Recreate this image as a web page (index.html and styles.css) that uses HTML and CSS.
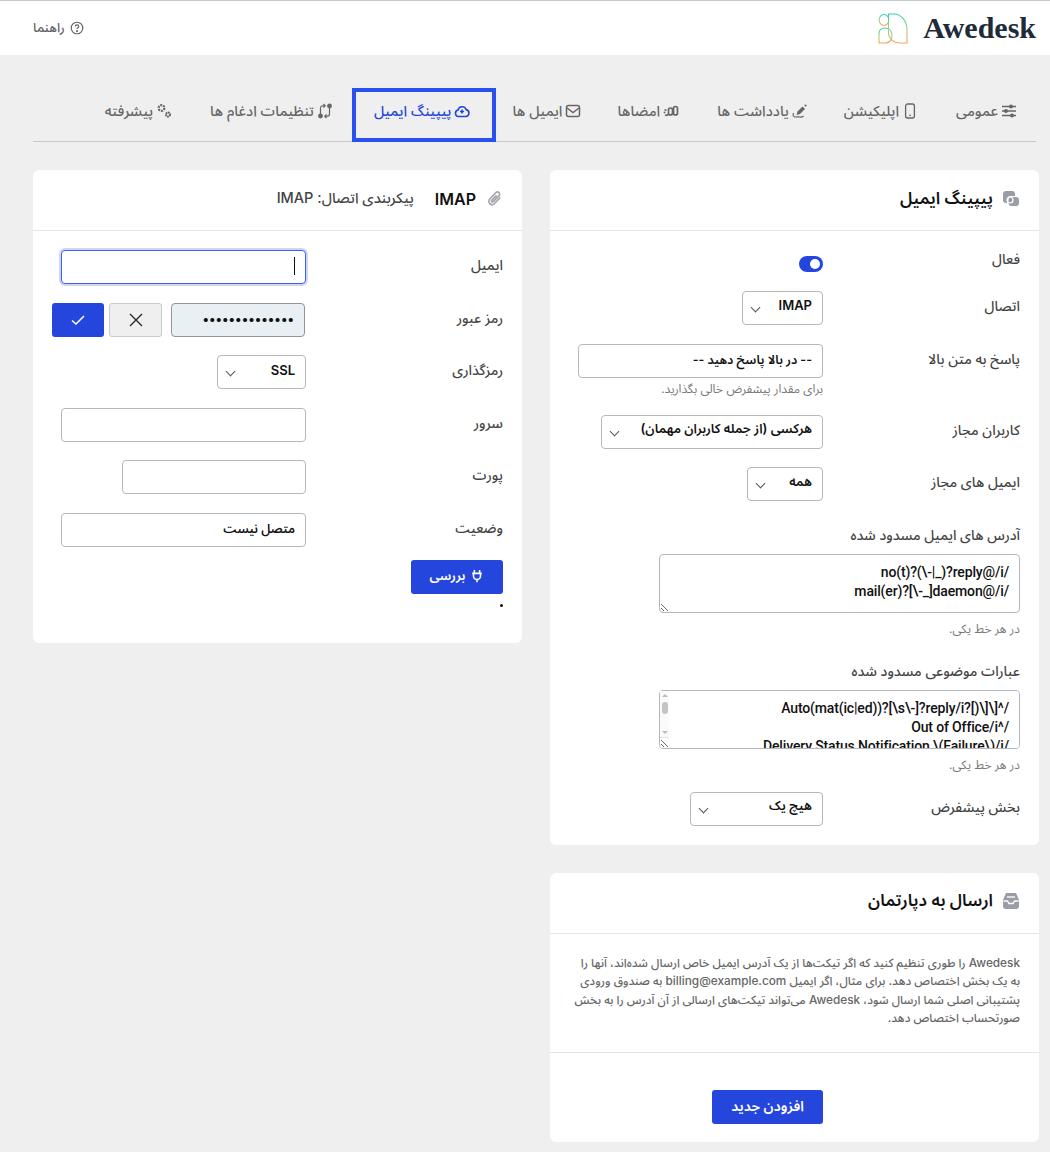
FILE: index.html
```html
<!DOCTYPE html>
<html lang="fa" dir="rtl">
<head>
    <meta charset="UTF-8">
    <title>Awedesk</title>
    <link rel="stylesheet" href="styles.css">
</head>
<body>
    <header class="topbar">
        <div class="brand">
            <span class="brand-name" dir="ltr">Awedesk</span>
            <svg class="brand-mark" viewBox="0 0 30 31" width="30" height="31" fill="none">
                <defs>
                    <linearGradient id="brandGrad" x1="0" y1="0" x2="0" y2="1">
                        <stop offset="0" stop-color="#2fd0a8"/>
                        <stop offset="0.5" stop-color="#a9cf8c"/>
                        <stop offset="1" stop-color="#f2a65a"/>
                    </linearGradient>
                </defs>
                <g stroke="url(#brandGrad)" stroke-width="1.100">
                    <ellipse cx="6" cy="7" rx="4.800" ry="5.500"/>
                    <path d="M1 30v-9c0-4 2.500-6 6-6 4.500 0 7 3.500 7 8 0 4-3 7-6.500 7z"/>
                    <path d="M10.500 1h5c8 0 13.500 7 13.500 16v13h-7c-6.500 0-11.500-4-11.500-11z"/>
                </g>
            </svg>
        </div>
        <a class="help-link">
            <svg viewBox="0 0 16 16" width="14" height="14" fill="none" stroke="#5f5f66" stroke-width="1.300">
                <circle cx="8" cy="8" r="6.600"/>
                <path d="M6 6.300c0-1.200 1-1.900 2-1.900s2 .7 2 1.800c0 1.500-2 1.500-2 3"/>
                <circle cx="8" cy="11.400" r=".5" fill="#5f5f66"/>
            </svg>
            راهنما
        </a>
    </header>

    <nav class="tabs">
        <a class="tab">
            <svg viewBox="0 0 16 16" width="16" height="16" fill="none" stroke="currentColor" stroke-width="1.400"><path d="M1 3.500h14M1 8h14M1 12.500h14"/><circle cx="10" cy="3.500" r="1.300" fill="currentColor"/><circle cx="5" cy="8" r="1.300" fill="currentColor"/><circle cx="11" cy="12.500" r="1.300" fill="currentColor"/></svg>
            عمومی
        </a>
        <a class="tab">
            <svg viewBox="0 0 16 16" width="16" height="16" fill="none" stroke="currentColor" stroke-width="1.300"><rect x="3.600" y="1" width="8.800" height="14" rx="2"/><path d="M7.200 12.300h1.600"/></svg>
            اپلیکیشن
        </a>
        <a class="tab">
            <svg viewBox="0 0 16 16" width="16" height="16" fill="currentColor"><circle cx="13.500" cy="2.500" r="1.100"/><path d="M10.500 3.500l2.500 2.500-5 5-3.500 1 1-3.500z"/><path d="M1.500 10c-1 2 0 4 2 4s3-.5 4.500 0 2.500 0 3.500-1" fill="none" stroke="currentColor" stroke-width="1.200"/></svg>
            یادداشت ها
        </a>
        <a class="tab">
            <svg viewBox="0 0 16 16" width="16" height="16" fill="none" stroke="currentColor" stroke-width="1.700"><rect x="10.500" y="3.500" width="4" height="8.500" rx="2"/><rect x="5.500" y="5" width="4" height="7" rx="2"/><path d="M5.500 11c-1 1.500-2.500 1.500-3.500 1"/><circle cx="2.500" cy="7" r="1.100" fill="currentColor" stroke="none"/><circle cx="1.500" cy="9.500" r=".9" fill="currentColor" stroke="none"/></svg>
            امضاها
        </a>
        <a class="tab">
            <svg viewBox="0 0 16 16" width="16" height="16" fill="none" stroke="currentColor" stroke-width="1.500"><rect x="1.500" y="2.500" width="13" height="11" rx="2"/><path d="M2 5l6 4.500L14 5"/></svg>
            ایمیل ها
        </a>
        <a class="tab is-active">
            <svg viewBox="0 0 16 16" width="16" height="16" fill="none" stroke="currentColor" stroke-width="1.600"><path d="M4.500 13.500a3.300 3.300 0 0 1-.5-6.500 4.300 4.300 0 0 1 8.200-.4 3.500 3.500 0 0 1-.4 6.900z"/><path d="M8 6.500v4M6 8.500h4"/></svg>
            پیپینگ ایمیل
        </a>
        <a class="tab">
            <svg viewBox="0 0 16 16" width="16" height="16" fill="none" stroke="currentColor" stroke-width="1.200"><circle cx="3.500" cy="13" r="1.800" fill="currentColor"/><circle cx="12.500" cy="3" r="1.800" fill="currentColor"/><path d="M3.500 11V5c0-1.500 1-2.200 2-2.200H8M6.500 1l1.700 1.800-1.700 1.800M12.500 5v6c0 1.500-1 2.200-2 2.200H8M9.500 11.400l-1.700 1.800 1.700 1.800"/></svg>
            تنظیمات ادغام ها
        </a>
        <a class="tab">
            <svg viewBox="0 0 16 16" width="16" height="16" fill="none" stroke="currentColor"><circle cx="5.500" cy="5" r="2.900" stroke-width="2.200" stroke-dasharray="2 1"/><circle cx="12" cy="11.500" r="2" stroke-width="2" stroke-dasharray="1.600 .5"/></svg>
            پیشرفته
        </a>
    </nav>

    <main class="columns">
        <div class="column">
            <section class="card">
                <div class="card-head">
                    <svg viewBox="0 0 18 18" width="18" height="18" fill="#9a9da5"><path d="M1 4a3 3 0 0 1 3-3h6a3 3 0 0 1 3 3v2H9a4 4 0 0 0-4 4v3H4a3 3 0 0 1-3-3z"/><path d="M6.500 10a3 3 0 0 1 3-3H14a3 3 0 0 1 3 3v3a3 3 0 0 1-3 3H9.500a3 3 0 0 1-3-3z"/><circle cx="8" cy="10" r="3" fill="none" stroke="#fff" stroke-width="1.200"/></svg>
                    <h2>پیپینگ ایمیل</h2>
                </div>
                <div class="card-body">
                    <div class="form-row toggle-row">
                        <label>فعال</label>
                        <span class="toggle"></span>
                    </div>
                    <div class="form-row">
                        <label>اتصال</label>
                        <div class="picker w-imap"><span dir="ltr">IMAP</span></div>
                    </div>
                    <div class="form-row with-hint">
                        <label>پاسخ به متن بالا</label>
                        <div class="field-wrap">
                            <input class="text-input w-reply" type="text" value="-- در بالا پاسخ دهید --">
                            <p class="hint">برای مقدار پیشفرض خالی بگذارید.</p>
                        </div>
                    </div>
                    <div class="form-row">
                        <label>کاربران مجاز</label>
                        <div class="picker w-users"><span>هرکسی (از جمله کاربران مهمان)</span></div>
                    </div>
                    <div class="form-row">
                        <label>ایمیل های مجاز</label>
                        <div class="picker w-all"><span>همه</span></div>
                    </div>
                    <div class="form-stack">
                        <label>آدرس های ایمیل مسدود شده</label>
                        <textarea class="text-area" spellcheck="false">/no(t)?(\-|_)?reply@/i
/mail(er)?[\-_]daemon@/i</textarea>
                        <p class="hint">در هر خط یکی.</p>
                    </div>
                    <div class="form-stack">
                        <label>عبارات موضوعی مسدود شده</label>
                        <div class="area-wrap">
                            <textarea class="text-area" spellcheck="false">/^[\[\(]?Auto(mat(ic|ed))?[\s\-]?reply/i
/^Out of Office/i
/Delivery Status Notification \(Failure\)/i
/Undelivered Mail/i</textarea>
                            <div class="scroll-bar">
                                <span class="scroll-up"></span>
                                <span class="scroll-thumb"></span>
                                <span class="scroll-down"></span>
                            </div>
                        </div>
                        <p class="hint">در هر خط یکی.</p>
                    </div>
                    <div class="form-row last">
                        <label>بخش پیشفرض</label>
                        <div class="picker w-dept"><span>هیچ یک</span></div>
                    </div>
                </div>
            </section>

            <section class="card">
                <div class="card-head">
                    <svg viewBox="0 0 18 18" width="18" height="18" fill="#9a9da5"><path d="M4 1h10l3 7v6a3 3 0 0 1-3 3H4a3 3 0 0 1-3-3V8z"/><path d="M1.500 9h4l1.500 2.500h4L12.500 9h4" fill="none" stroke="#fff" stroke-width="1.400"/><path d="M5 5h8" stroke="#fff" stroke-width="1.400"/></svg>
                    <h2>ارسال به دپارتمان</h2>
                </div>
                <p class="card-text">Awedesk را طوری تنظیم کنید که اگر تیکت‌ها از یک آدرس ایمیل خاص ارسال شده‌اند، آنها را به یک بخش اختصاص دهد. برای مثال، اگر ایمیل billing@example.com به صندوق ورودی پشتیبانی اصلی شما ارسال شود، Awedesk می‌تواند تیکت‌های ارسالی از آن آدرس را به بخش صورتحساب اختصاص دهد.</p>
                <div class="card-foot">
                    <button class="btn-primary btn-add" type="button">افزودن جدید</button>
                </div>
            </section>
        </div>

        <div class="column">
            <section class="card">
                <div class="card-head imap-head">
                    <svg viewBox="0 0 16 16" width="17" height="17" fill="none" stroke="#a4a7ae" stroke-width="1.600"><path d="M13.500 7L8 12.700a3 3 0 0 1-4.500-4.200l5.800-6a2 2 0 0 1 3 2.800L6.800 11a.9.900 0 0 1-1.400-1.300L10 5"/></svg>
                    <h2 dir="ltr">IMAP</h2>
                    <span class="head-note">پیکربندی اتصال: IMAP</span>
                </div>
                <div class="card-body">
                    <div class="form-row">
                        <label>ایمیل</label>
                        <div class="text-input is-focus w-full"><i class="caret"></i></div>
                    </div>
                    <div class="form-row">
                        <label>رمز عبور</label>
                        <div class="password-group">
                            <input class="text-input is-filled w-pass" type="password" value="00000000000000">
                            <button class="btn-cancel" type="button">
                                <svg viewBox="0 0 16 16" width="16" height="16" fill="none" stroke="#222" stroke-width="1.300"><path d="M2 2l12 12M14 2L2 14"/></svg>
                            </button>
                            <button class="btn-primary btn-ok" type="button">
                                <svg viewBox="0 0 16 16" width="16" height="16" fill="none" stroke="#fff" stroke-width="1.600"><path d="M2 8.500l4 3.500 8-8"/></svg>
                            </button>
                        </div>
                    </div>
                    <div class="form-row">
                        <label>رمزگذاری</label>
                        <div class="picker w-ssl"><span dir="ltr">SSL</span></div>
                    </div>
                    <div class="form-row">
                        <label>سرور</label>
                        <input class="text-input w-full" type="text">
                    </div>
                    <div class="form-row">
                        <label>پورت</label>
                        <input class="text-input w-port" type="text">
                    </div>
                    <div class="form-row status-row">
                        <label>وضعیت</label>
                        <input class="text-input w-full" type="text" value="متصل نیست">
                    </div>
                    <button class="btn-primary btn-check" type="button">
                        <svg viewBox="0 0 16 16" width="14" height="14" fill="none" stroke="#fff" stroke-width="1.800"><path d="M5 1v4M11 1v4M2.500 5h11M4 5v3a4 4 0 0 0 8 0V5M8 12v3"/></svg>
                        بررسی
                    </button>
                    <div class="status-dot"></div>
                </div>
            </section>
        </div>
    </main>
</body>
</html>
```

FILE: styles.css
```css
body {
    margin: 0;
    background-color: #efefef;
    font-family: Inter, "Noto Sans Arabic", "DejaVu Sans", sans-serif;
    font-size: 14px;
    color: #111;
}
.topbar {
    height: 54px;
    border-top: 1px solid #c5c8d2;
    background-color: #fff;
    display: flex;
    align-items: center;
    justify-content: space-between;
    padding: 0 14px 0 33px;
}
.brand {
    display: flex;
    align-items: center;
    gap: 15px;
}
.brand-name {
    font-family: "Liberation Serif", serif;
    font-weight: bold;
    font-size: 30px;
    color: #1d2b3a;
}
.help-link {
    display: flex;
    align-items: center;
    gap: 5px;
    font-size: 13px;
    font-weight: 500;
    color: #5f5f66;
}
.tabs {
    display: flex;
    height: 53px;
    margin: 33px 14px 0 33px;
    border-bottom: 1px solid #c5c8d2;
}
.tab {
    display: flex;
    align-items: center;
    gap: 3px;
    padding: 0 19px 7px;
    font-size: 14.500px;
    font-weight: 500;
    color: #666;
    box-sizing: border-box;
}
.tab:nth-child(3),
.tab:nth-child(5) {
    margin-right: -2px;
}
.tab:nth-child(5) {
    padding-left: 16px;
}
.tab.is-active {
    padding: 0 22px 8px 18px;
    color: #2446dc;
    border: 4px solid #2b50f0;
    margin-bottom: -1px;
}
.columns {
    display: flex;
    gap: 28px;
    padding: 28px 11px 0 33px;
}
.column {
    flex: 1;
    min-width: 0;
}
.card {
    background-color: #fff;
    border-radius: 6px;
    margin-bottom: 28px;
}
.card-head {
    height: 61px;
    box-sizing: border-box;
    display: flex;
    align-items: center;
    gap: 9px;
    padding: 0 19px 3px;
    border-bottom: 1px solid #e3e5ee;
}
.card-head h2 {
    margin: 0;
    font-size: 17px;
    font-weight: 600;
}
.imap-head {
    gap: 10px;
}
.imap-head h2 {
    font-size: 16px;
}
.head-note {
    margin-right: 11px;
    font-size: 14.500px;
    font-weight: 500;
    color: #444;
}
.card-body {
    padding: 19px 19px 19px;
}
.form-row {
    display: flex;
    align-items: flex-start;
    margin-bottom: 18.600px;
}
.form-row label {
    width: 197px;
    flex: none;
    padding-top: 6px;
    line-height: 18px;
    font-size: 14px;
    font-weight: 500;
    color: #444;
}
.form-row.toggle-row {
    height: 22.400px;
}
.form-row.toggle-row label {
    padding-top: 0;
}
.form-row.last {
    margin-bottom: 0;
}
.form-row.status-row {
    margin-bottom: 13px;
}
.form-stack {
    margin: 24.600px 0 20px;
}
.form-stack + .form-stack {
    margin-top: 26px;
}
.form-stack label {
    display: block;
    font-size: 14px;
    font-weight: 500;
    color: #444;
    line-height: 18px;
    margin-bottom: 10px;
}
.text-input {
    display: block;
    height: 34px;
    box-sizing: border-box;
    padding: 0 10px 2px;
    border: 1px solid #b4b7c0;
    border-radius: 4px;
    background-color: #fff;
    font: inherit;
    font-size: 12.500px;
    font-weight: 600;
    color: #111;
    outline: none;
}
.text-input.is-focus {
    display: flex;
    align-items: center;
    border-color: #3b63f3;
    box-shadow: 0 0 0 2px #cfd6f2;
}
.caret {
    width: 1px;
    height: 18px;
    background-color: #111;
}
.text-input.is-filled {
    background-color: #e8f0f4;
    border-color: #8f949e;
    margin-right: 1px;
    font-size: 13px;
}
.w-full { width: 245px; }
.w-reply { width: 245px; }
.w-pass { width: 134px; }
.w-port { width: 184px; }
.picker {
    position: relative;
    height: 34px;
    box-sizing: border-box;
    display: flex;
    align-items: center;
    padding: 0 10px 5px;
    border: 1px solid #b4b7c0;
    border-radius: 4px;
    font-size: 13px;
    font-weight: 600;
}
.picker::after {
    content: "";
    position: absolute;
    left: 9px;
    top: 12px;
    width: 6px;
    height: 6px;
    border-right: 1.300px solid #555;
    border-bottom: 1.300px solid #555;
    transform: rotate(45deg);
}
.w-imap { width: 81px; }
.w-users { width: 222px; }
.w-all { width: 76px; }
.w-dept { width: 133px; }
.w-ssl { width: 89px; }
.field-wrap {
    flex: none;
}
.hint {
    margin: 3.600px 0 0;
    font-size: 12px;
    line-height: 15px;
    color: #777;
}
.form-stack .hint {
    margin-top: 8px;
}
.toggle {
    position: relative;
    display: block;
    width: 24px;
    height: 16px;
    margin-top: 6px;
    border-radius: 8px;
    background-color: #2446dc;
}
.toggle::after {
    content: "";
    position: absolute;
    right: 3px;
    top: 3px;
    width: 10px;
    height: 10px;
    border-radius: 50%;
    background-color: #fff;
}
.text-area {
    display: block;
    width: 361px;
    height: 59px;
    box-sizing: border-box;
    padding: 8px 10px;
    border: 1px solid #b4b7c0;
    border-radius: 4px;
    font-family: Roboto, sans-serif;
    font-size: 14px;
    letter-spacing: -0.150px;
    font-weight: 500;
    line-height: 19px;
    color: #111;
    outline: none;
}
.area-wrap {
    position: relative;
    width: 361px;
}
/* scrollbars are hidden in the capture, so this one is drawn */
.scroll-bar {
    position: absolute;
    left: 1px;
    top: 1px;
    bottom: 11px;
    width: 9px;
    background-color: #fafafa;
    border-bottom: 1px solid #e4e4e4;
}
.scroll-thumb {
    position: absolute;
    left: 2px;
    top: 11px;
    width: 6px;
    height: 12px;
    border-radius: 3px;
    background-color: #c4c4c4;
}
.scroll-up,
.scroll-down {
    position: absolute;
    left: 2px;
    width: 0;
    height: 0;
    border-left: 3px solid transparent;
    border-right: 3px solid transparent;
}
.scroll-up {
    top: 3px;
    border-bottom: 3px solid #bdbdbd;
}
.scroll-down {
    bottom: 3px;
    border-top: 3px solid #bdbdbd;
}
.card-text {
    margin: 0;
    padding: 20px 19px 25px;
    border-bottom: 1px solid #e3e5ee;
    font-size: 11.800px;
    font-weight: 500;
    line-height: 18.300px;
    color: #666;
}
.card-foot {
    padding: 37px 216px 18px 19px;
}
.btn-primary {
    display: flex;
    align-items: center;
    justify-content: center;
    border: none;
    border-radius: 3px;
    background-color: #2446dc;
    color: #fff;
    font: inherit;
    font-size: 13px;
    font-weight: 600;
    cursor: pointer;
}
.btn-add {
    width: 111px;
    height: 34px;
    font-size: 14px;
    padding-bottom: 3px;
}
.password-group {
    display: flex;
}
.btn-cancel {
    width: 53px;
    height: 34px;
    display: flex;
    align-items: center;
    justify-content: center;
    margin: 0 9px 0 5px;
    padding: 0;
    border: 1px solid #c8cad0;
    border-radius: 3px;
    background-color: #efefef;
}
.btn-ok {
    width: 52px;
    height: 34px;
    padding: 0;
}
.btn-check {
    width: 92px;
    height: 34px;
    gap: 5px;
    padding-bottom: 2px;
}
.status-dot {
    width: 3px;
    height: 3px;
    margin: 10px 0 17px;
    border-radius: 50%;
    background-color: #111;
}
```
